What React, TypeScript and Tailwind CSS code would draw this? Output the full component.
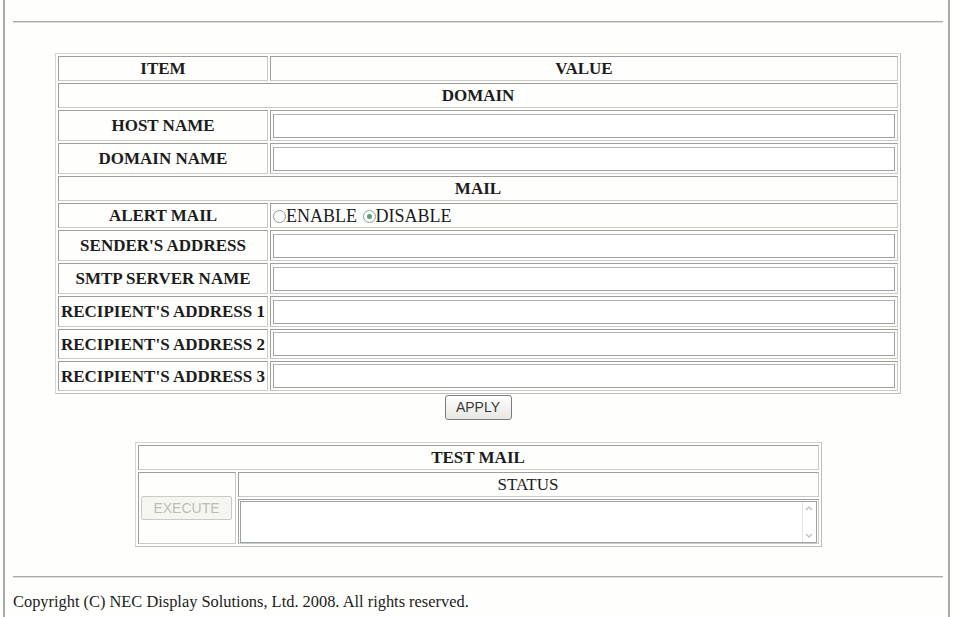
import React from "react";

const serif = { fontFamily: '"Liberation Serif", "Times New Roman", serif' };
const sans = { fontFamily: '"Liberation Sans", Arial, sans-serif' };

// Inset cell border in the style of a classic bordered HTML table
const cell =
  "border border-t-[#9e9e9c] border-l-[#9e9e9c] border-b-[#cacac7] border-r-[#cacac7] p-0";

function Label({ children }: { children: React.ReactNode }) {
  return (
    <td className={`${cell} text-center font-bold whitespace-nowrap text-[17px] leading-none`}>
      {children}
    </td>
  );
}

function TextBox() {
  return (
    <div className="mx-[2px] h-[24px] border border-[#9aa2a8] border-t-[#adb3b8] bg-white" />
  );
}

function Radio({ checked }: { checked?: boolean }) {
  return (
    <span className="relative ml-[1px] inline-block h-[13px] w-[13px] rounded-full border border-[#8e9ca8] bg-white align-[-1px]">
      {checked && <span className="absolute inset-[3px] rounded-full bg-[#5a9e72]" />}
    </span>
  );
}

function Section({ title }: { title: string }) {
  return (
    <tr className="h-[25px]">
      <td colSpan={2} className={`${cell} text-center font-bold text-[17px] leading-none`}>
        {title}
      </td>
    </tr>
  );
}

function FieldRow({ label, tall = true }: { label: string; tall?: boolean }) {
  return (
    <tr className={tall ? "h-[31px]" : "h-[30px]"}>
      <Label>{label}</Label>
      <td className={cell}>
        <TextBox />
      </td>
    </tr>
  );
}

export default function App() {
  return (
    <div className="min-h-[617px] bg-[#fefefc] text-[#1c1c1c]" style={serif}>
      <div className="mx-[3px] min-h-[617px] border-x-2 border-[#a9a9a7] pl-[8px] pr-[5px] pt-[21px]">
        <div className="border-t border-b border-t-[#aaaaa6] border-b-[#dcdcd8]" />

        {/* settings table */}
        <div className="mt-[30px] flex justify-center">
          <table className="w-[846px] table-fixed border-separate border-spacing-[2px] border border-t-[#d4d4d2] border-l-[#d4d4d2] border-b-[#bdbdbb] border-r-[#bdbdbb]">
            <colgroup>
              <col className="w-[210px]" />
              <col />
            </colgroup>
            <tbody>
              <tr className="h-[25px]">
                <Label>ITEM</Label>
                <td className={`${cell} text-center font-bold text-[17px] leading-none`}>VALUE</td>
              </tr>
              <Section title="DOMAIN" />
              <FieldRow label="HOST NAME" />
              <FieldRow label="DOMAIN NAME" />
              <Section title="MAIL" />
              <tr className="h-[25px]">
                <Label>ALERT MAIL</Label>
                <td className={`${cell} px-[1px] text-[18px] leading-none whitespace-nowrap`}>
                  <Radio />
                  ENABLE <Radio checked />
                  DISABLE
                </td>
              </tr>
              <FieldRow label="SENDER'S ADDRESS" />
              <FieldRow label="SMTP SERVER NAME" />
              <FieldRow label="RECIPIENT'S ADDRESS 1" />
              <FieldRow label="RECIPIENT'S ADDRESS 2" tall={false} />
              <FieldRow label="RECIPIENT'S ADDRESS 3" tall={false} />
            </tbody>
          </table>
        </div>

        <div className="mt-[1px] flex justify-center">
          <button
            className="h-[25px] w-[67px] rounded-[3px] border border-[#7c7c7c] bg-gradient-to-b from-white to-[#e6e6e2] text-[14px] text-[#3a3a3a]"
            style={sans}
          >
            APPLY
          </button>
        </div>

        {/* test mail table */}
        <div className="mt-[22px] flex justify-center">
          <table className="w-[687px] table-fixed border-separate border-spacing-[2px] border border-t-[#d4d4d2] border-l-[#d4d4d2] border-b-[#bdbdbb] border-r-[#bdbdbb]">
            <colgroup>
              <col className="w-[98px]" />
              <col />
            </colgroup>
            <tbody>
              <tr className="h-[25px]">
                <td colSpan={2} className={`${cell} text-center font-bold text-[17px] leading-none`}>
                  TEST MAIL
                </td>
              </tr>
              <tr className="h-[25px]">
                <td rowSpan={2} className={`${cell} text-center align-middle`}>
                  <button
                    disabled
                    className="h-[24px] w-[91px] rounded-[2px] border border-[#cbcbc6] bg-[#f5f5f1] text-[14px] text-[#bdbdb8]"
                    style={sans}
                  >
                    EXECUTE
                  </button>
                </td>
                <td className={`${cell} text-center text-[17px] leading-none`}>STATUS</td>
              </tr>
              <tr className="h-[45px]">
                <td className={`${cell} px-[1px]`}>
                  <div className="flex h-[42px] border border-[#9aa2a8] bg-white">
                    <div className="flex-1" />
                    <div className="flex w-[14px] flex-col items-center justify-between border-l border-[#e6e6e4] py-[3px] text-[#c0c0bc]">
                      <svg width="8" height="6" viewBox="0 0 8 6">
                        <path d="M1 5 L4 2 L7 5" fill="none" stroke="currentColor" strokeWidth="1.3" />
                      </svg>
                      <svg width="8" height="6" viewBox="0 0 8 6">
                        <path d="M1 1 L4 4 L7 1" fill="none" stroke="currentColor" strokeWidth="1.3" />
                      </svg>
                    </div>
                  </div>
                </td>
              </tr>
            </tbody>
          </table>
        </div>

        <div className="mt-[29px] border-t border-b border-t-[#aaaaa6] border-b-[#dcdcd8]" />
        <p className="mt-[14px] text-[16.4px] leading-[19px]">
          Copyright (C) NEC Display Solutions, Ltd. 2008. All rights reserved.
        </p>
      </div>
    </div>
  );
}
